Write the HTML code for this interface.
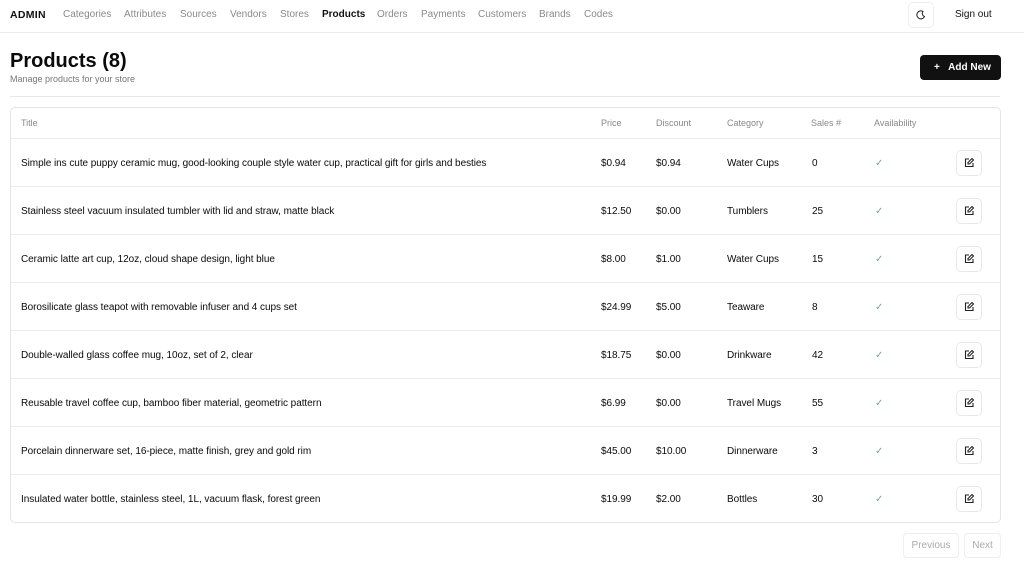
<!DOCTYPE html>
<html><head><style>
*{box-sizing:border-box;margin:0;padding:0}
body{width:1024px;height:574px;background:#fff;font-family:"Liberation Sans",sans-serif;color:#0a0a0a;position:relative;overflow:hidden}
.nav{height:33px;border-bottom:1px solid #ececec;position:relative}
.nav span{position:absolute;top:9px;font-size:10px;color:#8a8a8a}
.nav .logo{left:10px;font-weight:bold;color:#111;font-size:10.5px;letter-spacing:.3px}
.theme{position:absolute;left:908px;top:2px;width:26px;height:26px;border:1px solid #eee;border-radius:5px}
h1{position:absolute;left:10px;top:50px;font-size:20px;font-weight:bold}
.sub{position:absolute;left:10px;top:74px;font-size:9px;color:#777}
.sep{position:absolute;left:10px;top:96px;width:990px;border-top:1px solid #e8e8e8}
.add{position:absolute;left:920px;top:55px;width:81px;height:25px;background:#111;border-radius:4px;color:#fff;font-size:10px;font-weight:bold;line-height:25px;padding-left:14px}
.tbl{position:absolute;left:10px;top:107px;width:991px;height:416px;border:1px solid #e5e5e5;border-radius:5px}
.row{position:absolute;left:0;width:989px;height:48px;border-top:1px solid #ececec}
.row span,.hd span{position:absolute;font-size:10px}
.row span{top:19px;letter-spacing:-0.05px}
.hd{position:absolute;top:0;height:31px;width:989px}
.hd span{top:10px;color:#888;font-size:9px}
.chk{color:#5bb09a;font-size:10px}
.ed{position:absolute;left:945px;top:11px;width:26px;height:26px;border:1px solid #e8e8e8;border-radius:5px}
.pg{position:absolute;top:533px;height:25px;border:1px solid #eee;border-radius:4px;font-size:10px;color:#aaa;line-height:23px;text-align:center}
</style></head><body>
<div class="nav">
<span class="logo">ADMIN</span>
<span style="left:63px">Categories</span><span style="left:124px">Attributes</span><span style="left:180px">Sources</span><span style="left:230px">Vendors</span><span style="left:280px">Stores</span><span style="left:322px;color:#111;font-weight:bold">Products</span><span style="left:377px">Orders</span><span style="left:421px">Payments</span><span style="left:478px">Customers</span><span style="left:539px">Brands</span><span style="left:584px">Codes</span>
<div class="theme"><svg width="24" height="24" viewBox="0 0 24 24"><path d="M14 8.5a4 4 0 1 0 1.5 5 3.2 3.2 0 0 1-1.5-5z" fill="none" stroke="#222" stroke-width="1"/></svg></div>
<span style="left:955px;color:#111">Sign out</span>
</div>
<h1>Products (8)</h1>
<div class="sub">Manage products for your store</div>
<div class="add">+&nbsp;&nbsp;&nbsp;Add New</div>
<div class="sep"></div>
<div class="tbl">
<div class="hd"><span style="left:10px">Title</span><span style="left:590px">Price</span><span style="left:645px">Discount</span><span style="left:716px">Category</span><span style="left:800px">Sales #</span><span style="left:863px">Availability</span></div>
</div>
<script>
const d=[["Simple ins cute puppy ceramic mug, good-looking couple style water cup, practical gift for girls and besties","$0.94","$0.94","Water Cups","0"],
["Stainless steel vacuum insulated tumbler with lid and straw, matte black","$12.50","$0.00","Tumblers","25"],
["Ceramic latte art cup, 12oz, cloud shape design, light blue","$8.00","$1.00","Water Cups","15"],
["Borosilicate glass teapot with removable infuser and 4 cups set","$24.99","$5.00","Teaware","8"],
["Double-walled glass coffee mug, 10oz, set of 2, clear","$18.75","$0.00","Drinkware","42"],
["Reusable travel coffee cup, bamboo fiber material, geometric pattern","$6.99","$0.00","Travel Mugs","55"],
["Porcelain dinnerware set, 16-piece, matte finish, grey and gold rim","$45.00","$10.00","Dinnerware","3"],
["Insulated water bottle, stainless steel, 1L, vacuum flask, forest green","$19.99","$2.00","Bottles","30"]];
const t=document.querySelector('.tbl');
d.forEach((r,i)=>{t.insertAdjacentHTML('beforeend',`<div class="row" style="top:${30+i*48}px"><span style="left:10px">${r[0]}</span><span style="left:590px">${r[1]}</span><span style="left:645px">${r[2]}</span><span style="left:716px">${r[3]}</span><span style="left:801px">${r[4]}</span><span class="chk" style="left:864px">✓</span><div class="ed"><svg width="24" height="24" viewBox="0 0 24 24"><path d="M12 8H8.5v7.5H16V12" fill="none" stroke="#222" stroke-width="1.1"/><path d="M15 7.5l1.5 1.5-4 4h-1.5v-1.5z" fill="none" stroke="#222" stroke-width="1.1"/></svg></div></div>`)});
</script>
<div class="pg" style="left:903px;width:56px">Previous</div>
<div class="pg" style="left:964px;width:37px">Next</div>
</body></html>
